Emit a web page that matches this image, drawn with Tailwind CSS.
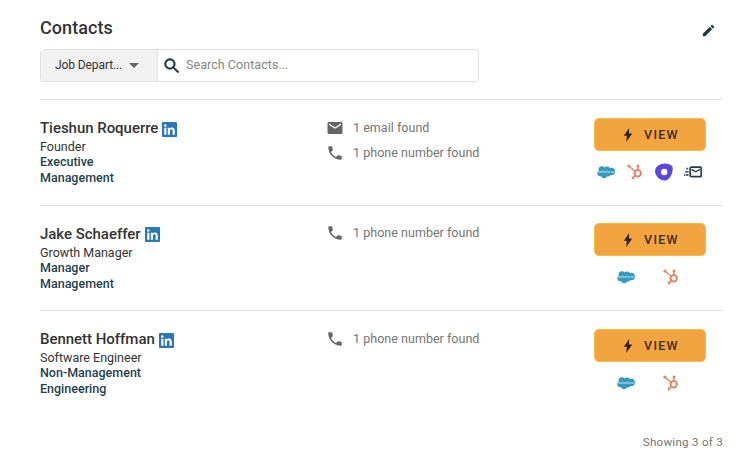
<!DOCTYPE html>
<html lang="en">
  <head>
    <meta charset="UTF-8" />
    <meta name="viewport" content="width=device-width, initial-scale=1.0" />
    <title>Contacts</title>
    <script src="https://cdn.jsdelivr.net/npm/@tailwindcss/browser@4"></script>
  </head>
  <body class="bg-white font-[Roboto,sans-serif] text-[#333]">
    <!-- Shared icons -->
    <svg class="hidden">
      <symbol id="linkedin" viewBox="0 0 16 16">
        <rect width="16" height="16" rx="1" fill="#2878b5" />
        <path fill="#fff" d="M2.4 6h2.3v7.5H2.4zM3.55 2.3a1.35 1.35 0 1 1 0 2.7 1.35 1.35 0 0 1 0-2.7zM6.2 6h2.2v1c.4-.7 1.200-1.200 2.300-1.200 2.200 0 2.900 1.400 2.900 3.500v4.200h-2.300V9.700c0-1.100-.2-1.900-1.300-1.900s-1.500.8-1.500 1.900v3.800H6.200z" />
      </symbol>
      <symbol id="mail" viewBox="0 0 24 24">
        <path d="M20 4H4c-1.100 0-1.990.9-1.990 2L2 18c0 1.100.9 2 2 2h16c1.100 0 2-.9 2-2V6c0-1.100-.9-2-2-2zm0 4l-8 5-8-5V6l8 5 8-5v2z" />
      </symbol>
      <symbol id="phone" viewBox="0 0 24 24">
        <path d="M6.620 10.790c1.440 2.830 3.760 5.140 6.590 6.590l2.200-2.200c.27-.27.67-.36 1.020-.24 1.120.37 2.330.57 3.570.57.55 0 1 .45 1 1V20c0 .55-.45 1-1 1-9.390 0-17-7.610-17-17 0-.55.45-1 1-1h3.500c.55 0 1 .45 1 1 0 1.250.2 2.450.57 3.570.11.35.03.74-.25 1.020l-2.200 2.200z" />
      </symbol>
      <symbol id="bolt" viewBox="0 0 10 14">
        <path d="M6.200 0L.8 7.700h3L3.200 14l6-8.400H5.900z" />
      </symbol>
      <symbol id="salesforce" viewBox="0 0 18 13">
        <path fill="#3499bd" d="M7.500 1.500C8.200.8 9.100.4 10 .4c1.300 0 2.400.7 3 1.700.5-.2 1-.3 1.600-.3 2 0 3.400 1.600 3.400 3.700s-1.600 3.700-3.600 3.700c-.3 0-.5 0-.8-.1-.4.900-1.300 1.500-2.300 1.500-.4 0-.8-.1-1.200-.3-.5 1.200-1.600 2-2.900 2-1.400 0-2.500-.9-3-2.100-.2 0-.4.1-.6.1C1.600 10.300.3 9 .3 7.300c0-1.100.6-2.100 1.500-2.600-.2-.4-.3-.8-.3-1.300C1.500 1.600 2.900.3 4.700.3c1.100 0 2.100.5 2.800 1.200z" />
        <text x="9" y="7.400" text-anchor="middle" font-size="3.600" font-style="italic" fill="#d8eef6">salesforce</text>
      </symbol>
      <symbol id="hubspot" viewBox="0 0 16 16">
        <g fill="none" stroke="#e08565">
          <circle cx="10.700" cy="9.200" r="3.200" stroke-width="2" />
          <path stroke-width="1.400" d="M10.900 6V2.600M8.200 7.200L2 2.200M8.400 11.500l-2.200 2.300" />
        </g>
        <g fill="#e08565">
          <circle cx="11" cy="2" r="1.500" />
          <circle cx="1.900" cy="2" r="1.600" />
          <circle cx="6" cy="14" r="1.400" />
        </g>
      </symbol>
      <symbol id="outreach" viewBox="0 0 18 18">
        <path fill="#5b48de" fill-rule="evenodd" d="M6.300 1.100C9.500-.1 14.200.7 16.500 2.500c1.900 1.500 1.400 4.900.4 7.900-1.100 3.500-3.900 7-7.400 7.200C5.500 17.800.500 13.600.100 8.800-.2 4.900 2.900 2.300 6.300 1.100zM9.200 5.800a3.200 3.200 0 1 0 0 6.400 3.200 3.200 0 0 0 0-6.400z" />
      </symbol>
      <symbol id="sequence" viewBox="0 0 18 12">
        <g fill="none" stroke="#263d48" stroke-width="1.700">
          <rect x="6.200" y="1.200" width="11" height="9.400" rx="1" />
          <path d="M7.500 3.300l4.200 2.500 4.300-2.500" stroke-width="1.400" />
          <path d="M2.300 2.700h2.200M1.300 5.800h3.200M0 9h4.500" stroke-dasharray="1.500 .5 3" />
        </g>
      </symbol>
    </svg>

    <div class="h-[468px] pt-[17px] pr-8 pl-10">
      <div class="flex h-8 justify-between">
        <h1 class="text-[18px] leading-[22px] font-medium tracking-[0.05px]">Contacts</h1>
        <svg class="mt-[6px] mr-[7px] size-[15px] fill-[#1f3947]" viewBox="0 0 24 24">
          <path d="M3 17.250V21h3.750L17.810 9.940l-3.750-3.750L3 17.250zM20.710 7.040c.39-.39.39-1.020 0-1.410l-2.340-2.340c-.39-.39-1.020-.39-1.410 0l-1.830 1.830 3.750 3.750 1.830-1.830z" />
        </svg>
      </div>

      <div class="flex h-[33px] w-[439px] overflow-hidden rounded border border-[#e2e2e2]">
        <button class="flex w-[117px] items-center border-r border-[#e2e2e2] bg-[#f1f1f1] pb-px pl-[14px] text-[12px] tracking-[-0.1px]">
          Job Depart...
          <span class="ml-[7px] border-x-[5px] border-t-[5px] border-x-transparent border-t-[#666]"></span>
        </button>
        <div class="flex items-center">
          <svg class="ml-[4px] size-5 fill-[#1f3947]" viewBox="0 0 24 24">
            <path stroke="#1f3947" stroke-width=".5" d="M15.500 14h-.79l-.28-.27C15.410 12.590 16 11.110 16 9.500 16 5.910 13.090 3 9.500 3S3 5.910 3 9.500 5.910 16 9.500 16c1.610 0 3.090-.59 4.230-1.570l.27.28v.79l5 4.990L20.490 19l-4.990-5zm-6 0C7.010 14 5 11.990 5 9.500S7.010 5 9.500 5 14 7.010 14 9.500 11.990 14 9.500 14z" />
          </svg>
          <span class="ml-[4px] text-[12.5px] tracking-[0.05px] text-[#858585]">Search Contacts...</span>
        </div>
      </div>

      <div class="mt-[17px]">
        <div class="grid h-[106px] grid-cols-[287px_267px_112px] border-t border-[#e2e2e2] pt-[18px]">
          <div class="text-[12.5px] leading-[15.4px]">
            <h2 class="flex h-[21px] items-center gap-[4px] pt-px text-[15px] font-medium tracking-[-0.03px]">
              Tieshun Roquerre
              <svg class="size-[15px]"><use href="#linkedin" /></svg>
            </h2>
            <p>Founder</p>
            <p class="font-medium text-[#1f3f50]">Executive</p>
            <p class="font-medium text-[#1f3f50]">Management</p>
          </div>
          <div class="flex flex-col gap-[5px] text-[12.5px] tracking-[0.03px] text-[#757575]">
            <p class="-ml-px flex h-5 items-center gap-[9px]">
              <svg class="size-[18px] fill-[#666]"><use href="#mail" /></svg>
              1 email found
            </p>
            <p class="-ml-px flex h-5 items-center gap-[9px]">
              <svg class="size-[18px] fill-[#666]"><use href="#phone" /></svg>
              1 phone number found
            </p>
          </div>
          <div>
            <button class="flex h-[33px] w-full items-center justify-center gap-[11px] rounded-[5px] border border-[#f5bd3b] bg-[#f2a441] pt-px pl-[2px] text-[12.5px] font-medium tracking-[1.3px] text-[#3d2c16]">
              <svg class="h-[14px] w-[10px] fill-[#2d2417]"><use href="#bolt" /></svg>
              VIEW
            </button>
            <div class="mt-[11px] flex h-5 items-center justify-center gap-[11px] pr-[2px]">
              <svg class="h-[13px] w-[18px]"><use href="#salesforce" /></svg>
              <svg class="h-4 w-[18px]"><use href="#hubspot" /></svg>
              <svg class="size-[18px]"><use href="#outreach" /></svg>
              <svg class="h-3 w-[18px]"><use href="#sequence" /></svg>
            </div>
          </div>
        </div>

        <div class="grid h-[105px] grid-cols-[287px_267px_112px] border-t border-[#e2e2e2] pt-[17px]">
          <div class="text-[12.5px] leading-[15.4px]">
            <h2 class="flex h-[22px] items-center gap-[4px] pt-px text-[15px] font-medium tracking-[-0.03px]">
              Jake Schaeffer
              <svg class="size-[15px]"><use href="#linkedin" /></svg>
            </h2>
            <p>Growth Manager</p>
            <p class="font-medium text-[#1f3f50]">Manager</p>
            <p class="font-medium text-[#1f3f50]">Management</p>
          </div>
          <div class="text-[12.5px] tracking-[0.03px] text-[#757575]">
            <p class="-ml-px flex h-5 items-center gap-[9px]">
              <svg class="size-[18px] fill-[#666]"><use href="#phone" /></svg>
              1 phone number found
            </p>
          </div>
          <div>
            <button class="flex h-[33px] w-full items-center justify-center gap-[11px] rounded-[5px] border border-[#f5bd3b] bg-[#f2a441] pt-px pl-[2px] text-[12.5px] font-medium tracking-[1.3px] text-[#3d2c16]">
              <svg class="h-[14px] w-[10px] fill-[#2d2417]"><use href="#bolt" /></svg>
              VIEW
            </button>
            <div class="mt-[11px] flex h-5 items-center justify-center gap-[27px] pr-[3px]">
              <svg class="h-[13px] w-[18px]"><use href="#salesforce" /></svg>
              <svg class="h-4 w-[18px]"><use href="#hubspot" /></svg>
            </div>
          </div>
        </div>

        <div class="grid h-[105px] grid-cols-[287px_267px_112px] border-t border-[#e2e2e2] pt-[18px]">
          <div class="text-[12.5px] leading-[15.4px]">
            <h2 class="flex h-[21px] items-center gap-[4px] pt-px text-[15px] font-medium tracking-[-0.03px]">
              Bennett Hoffman
              <svg class="size-[15px]"><use href="#linkedin" /></svg>
            </h2>
            <p>Software Engineer</p>
            <p class="font-medium text-[#1f3f50]">Non-Management</p>
            <p class="font-medium text-[#1f3f50]">Engineering</p>
          </div>
          <div class="text-[12.5px] tracking-[0.03px] text-[#757575]">
            <p class="-ml-px flex h-5 items-center gap-[9px]">
              <svg class="size-[18px] fill-[#666]"><use href="#phone" /></svg>
              1 phone number found
            </p>
          </div>
          <div>
            <button class="flex h-[33px] w-full items-center justify-center gap-[11px] rounded-[5px] border border-[#f5bd3b] bg-[#f2a441] pt-px pl-[2px] text-[12.5px] font-medium tracking-[1.3px] text-[#3d2c16]">
              <svg class="h-[14px] w-[10px] fill-[#2d2417]"><use href="#bolt" /></svg>
              VIEW
            </button>
            <div class="mt-[11px] flex h-5 items-center justify-center gap-[27px] pr-[3px]">
              <svg class="h-[13px] w-[18px]"><use href="#salesforce" /></svg>
              <svg class="h-4 w-[18px]"><use href="#hubspot" /></svg>
            </div>
          </div>
        </div>
      </div>

      <p class="mt-[17px] text-right text-[11.5px] leading-5 tracking-[0.3px] text-[#757575]">Showing 3 of 3</p>
    </div>
  </body>
</html>
